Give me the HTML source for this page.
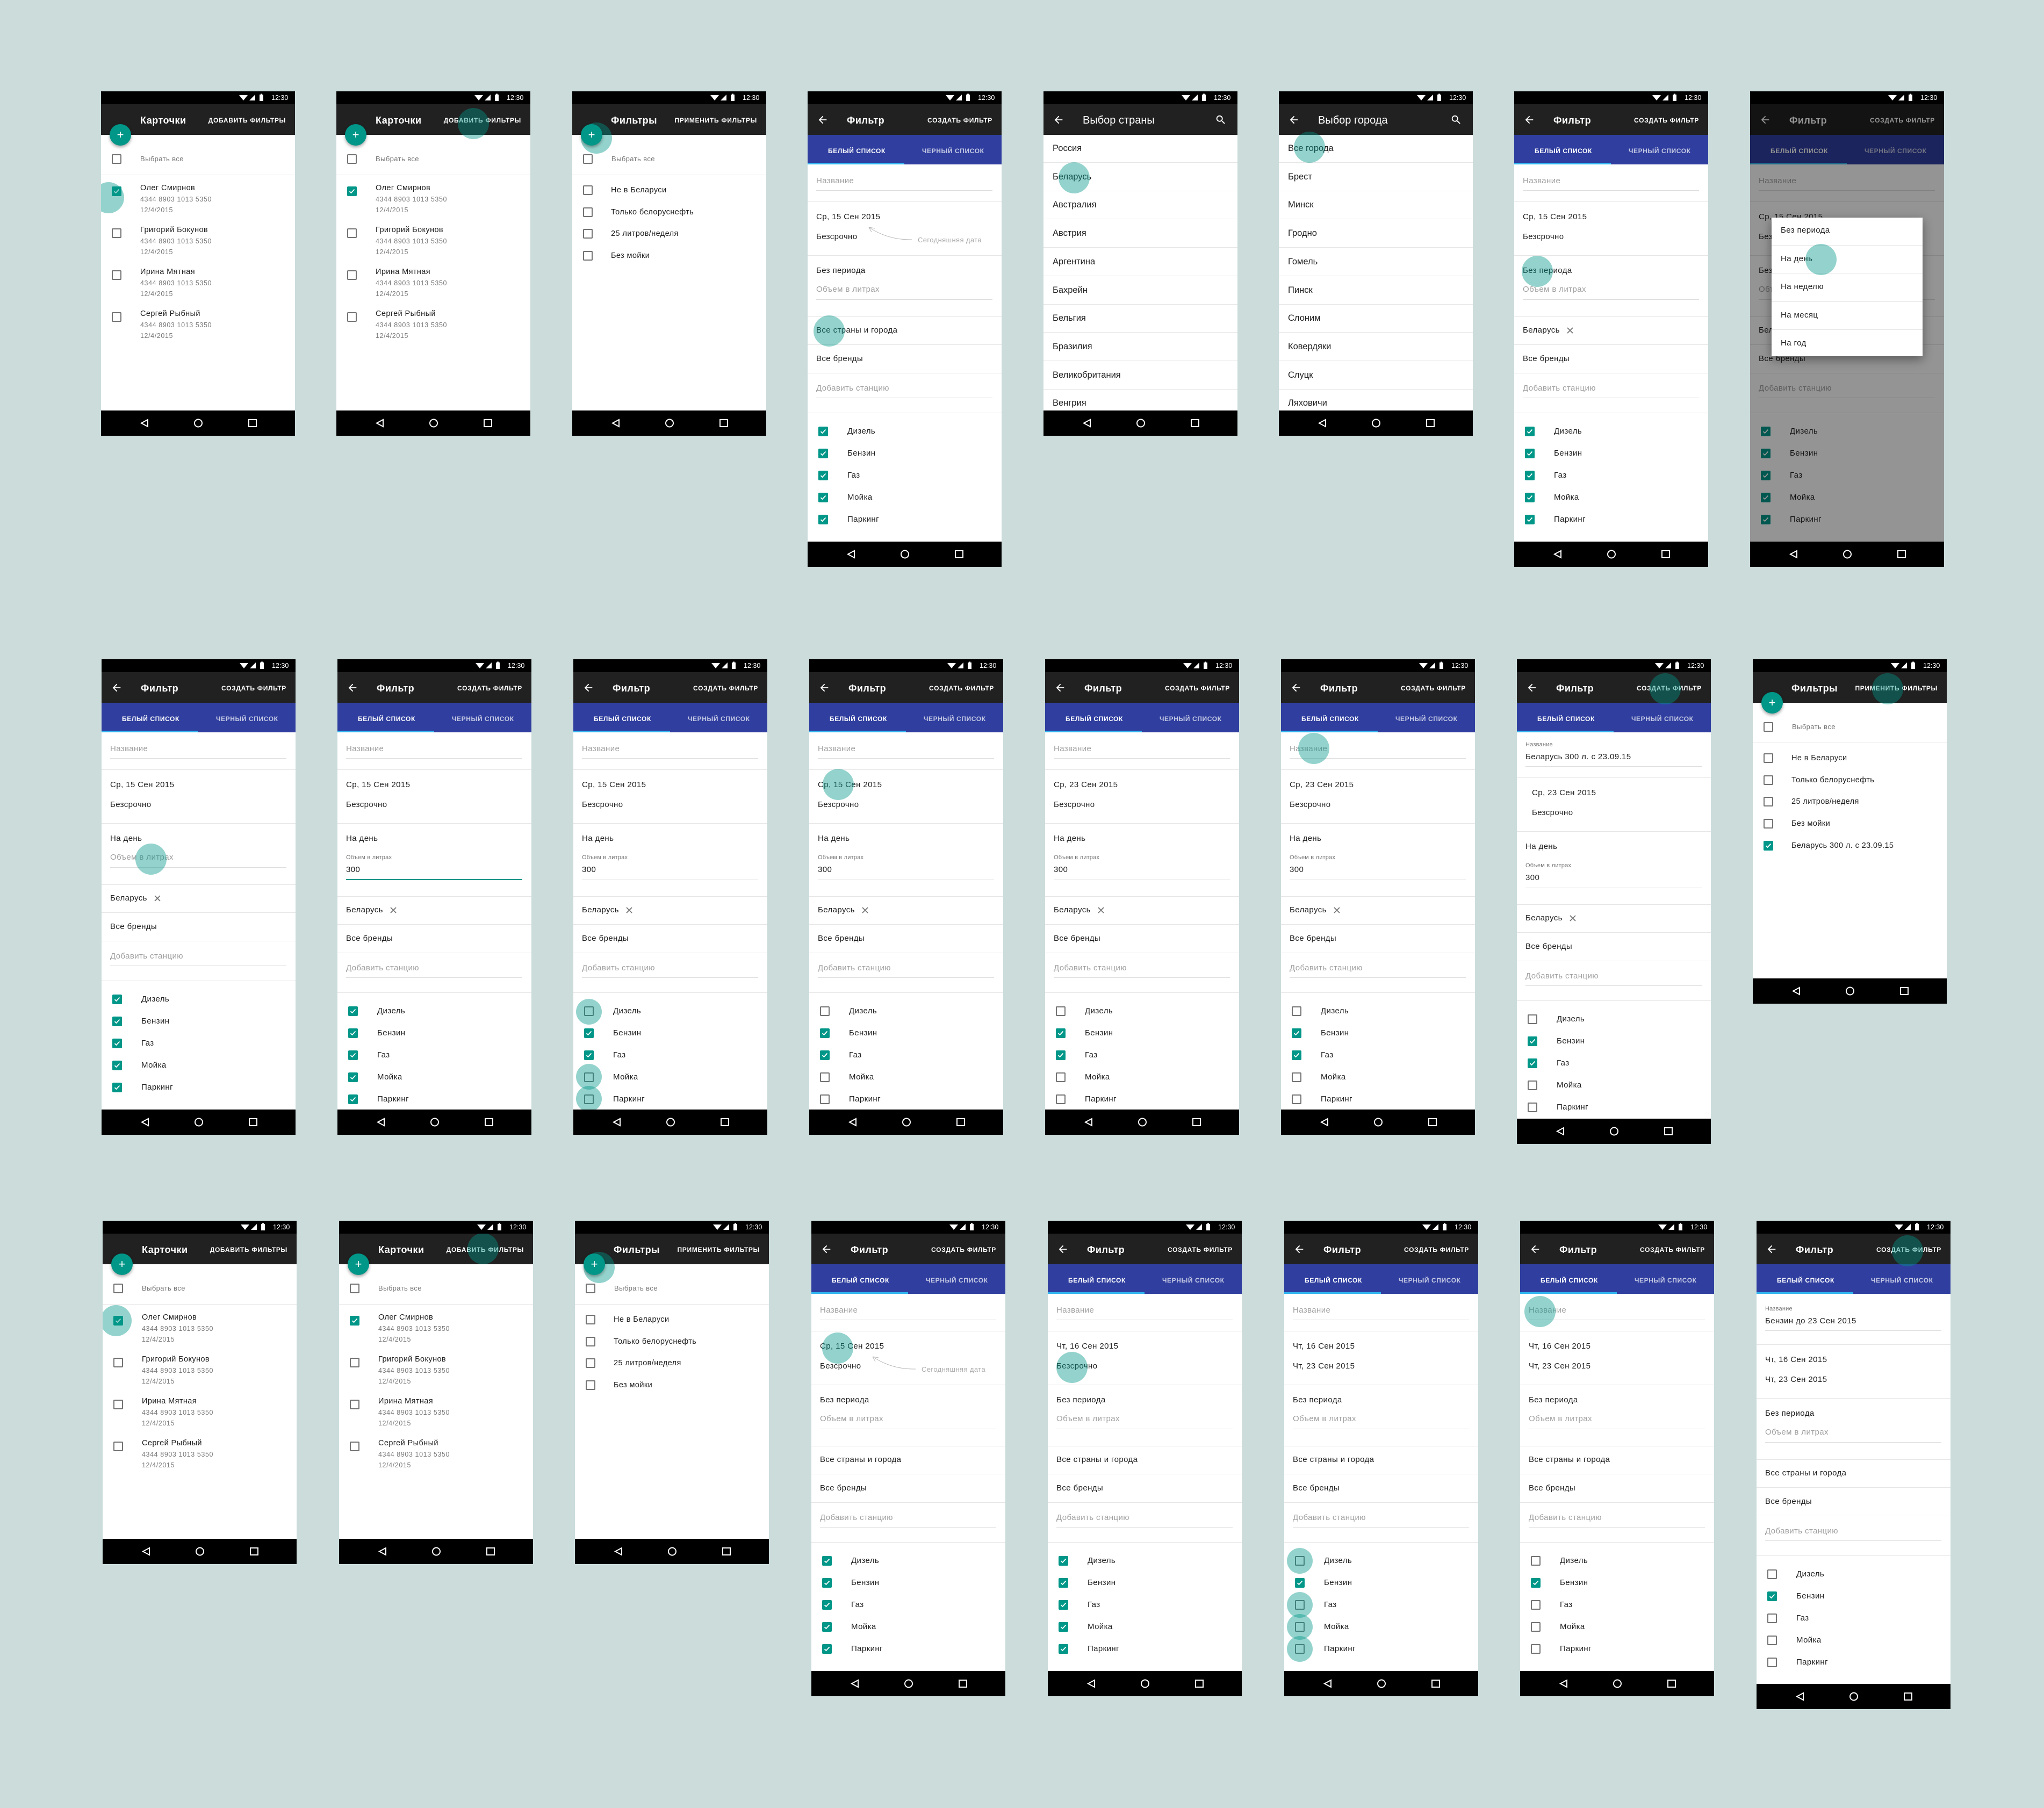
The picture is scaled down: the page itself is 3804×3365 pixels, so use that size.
<!DOCTYPE html>
<html><head><meta charset="utf-8">
<style>
body{margin:0;width:3804px;height:3365px;background:#cbdcdb;position:relative;overflow:hidden;font-family:"Liberation Sans",sans-serif}
.ph{position:absolute;width:361px;background:#fff;overflow:hidden}
.a{position:absolute;white-space:nowrap;line-height:20px;height:20px}
.sb{position:absolute;left:0;top:0;width:361px;height:24px;background:#000}
.ab{position:absolute;left:0;top:24px;width:361px;height:57px;background:#212121}
.tabs{position:absolute;left:0;top:81px;width:361px;height:55px;background:#303f9f}
.ind{position:absolute;left:0;top:133px;width:180px;height:3px;background:#2fb5f0}
.nav{position:absolute;left:0;bottom:0;width:361px;height:47px;background:#000}
.b{font-size:15px;color:#212121;letter-spacing:.4px}
.p{font-size:15px;color:#a0a0a0;letter-spacing:.4px}
.s{font-size:11px;color:#757575;letter-spacing:.2px}
.g{font-size:13px;color:#777;letter-spacing:.4px}
.n{font-size:12.5px;color:#7a7a7a;letter-spacing:.6px}
.tt{font-size:18px;font-weight:bold;color:#fff;letter-spacing:.5px}
.ac{font-size:12px;font-weight:bold;color:#fff;letter-spacing:.7px}
.tb{font-size:12px;font-weight:bold;color:#fff;letter-spacing:.6px}
.tb2{font-size:12px;font-weight:bold;color:rgba(255,255,255,.72);letter-spacing:.6px}
.k{font-family:"Liberation Sans Narrow","Liberation Sans",sans-serif;font-size:16.5px;color:#212121}
.kt{font-family:"Liberation Sans Narrow","Liberation Sans",sans-serif;font-size:20px;color:#fff}
.dv{position:absolute;left:0;width:361px;height:1px;background:#e6e6e6}
.ul{position:absolute;left:16px;width:328px;height:1px;background:#dedede}
.cb{position:absolute;width:14px;height:14px;border:2px solid #737373;border-radius:2px}
.cb.on{background:#009688;border-color:#009688}
.rp{position:absolute;border-radius:50%;background:rgba(0,150,136,.42)}
.fab{position:absolute;left:16px;top:61px;width:40px;height:40px;border-radius:50%;background:#009688;box-shadow:0 3px 6px rgba(0,0,0,.35);color:#fff;font-size:22px;line-height:40px;text-align:center}
</style></head><body>
<div id="root"></div>
<script>
var CK='<svg width="14" height="14" viewBox="0 0 14 14" style="position:absolute;left:0;top:0"><path d="M2.5 7.2l3 2.8 6-6.5" stroke="#fff" stroke-width="1.8" fill="none"/></svg>';
var SB='<div class="sb"><svg width="361" height="24" style="position:absolute;left:0;top:0"><path d="M257 7 L273 7 L265 17 Z" fill="#fff"/><path d="M276 17 L287 17 L287 6 Z" fill="#fff"/><rect x="295" y="6" width="7" height="12" fill="#fff"/><rect x="297" y="4.5" width="3" height="2" fill="#fff"/></svg><div class="a" style="left:317px;top:2px;font-size:12.5px;color:#fff">12:30</div></div>';
var NAV='<div class="nav"><svg width="361" height="47" style="position:absolute;left:0;top:0" fill="none" stroke="#fff" stroke-width="2"><path d="M87 17 L75 23.5 L87 30 Z"/><circle cx="181" cy="23.5" r="7"/><rect x="275" y="17" width="14" height="13"/></svg></div>';
var BACK='<svg width="22" height="22" viewBox="0 0 24 24" style="position:absolute;left:17px;top:42px"><path d="M20 11H7.83l5.59-5.59L12 4l-8 8 8 8 1.41-1.41L7.83 13H20v-2z" fill="#fff"/></svg>';
var SEARCH='<svg width="22" height="22" viewBox="0 0 24 24" style="position:absolute;left:319px;top:42px"><path d="M15.5 14h-.79l-.28-.27A6.47 6.47 0 0 0 16 9.5 6.5 6.5 0 1 0 9.5 16c1.61 0 3.09-.59 4.23-1.57l.27.28v.79l5 4.99L20.49 19l-4.99-5zm-6 0C7.01 14 5 11.99 5 9.5S7.01 5 9.5 5 14 7.01 14 9.5 11.99 14 9.5 14z" fill="#fff"/></svg>';
var XI='<svg width="14" height="14" style="position:absolute" viewBox="0 0 14 14"><path d="M2 2L12 12M12 2L2 12" stroke="#757575" stroke-width="1.8"/></svg>';
function T(x,y,t,c,e){return '<div class="a '+c+'" style="left:'+x+'px;top:'+(y-10)+'px;'+(e||'')+'">'+t+'</div>';}
function TR(y,t,c){return '<div class="a '+c+'" style="right:17px;top:'+(y-10)+'px">'+t+'</div>';}
function R(x,y,r){r=r||29;return '<div class="rp" style="left:'+(x-r)+'px;top:'+(y-r)+'px;width:'+(2*r)+'px;height:'+(2*r)+'px"></div>';}
function CB(x,cy,on){return '<div class="cb'+(on?' on':'')+'" style="left:'+x+'px;top:'+(cy-9)+'px">'+(on?CK:'')+'</div>';}
function DV(y){return '<div class="dv" style="top:'+y+'px"></div>';}
function UL(y,c){return '<div class="ul" style="top:'+y+'px;'+(c||'')+'"></div>';}
function RP(l){var s='';(l||[]).forEach(function(r){s+=R(r[0],r[1],r[2]);});return s;}
var out='';
function phone(x,y,h,inner){out+='<div class="ph" style="left:'+x+'px;top:'+y+'px;height:'+h+'px">'+inner+SB+NAV+'</div>';}

function F(o){
 var h='<div class="ab"></div>'+BACK+T(73,54,'Фильтр','tt')+TR(54,'СОЗДАТЬ ФИЛЬТР','ac');
 h+='<div class="tabs"></div><div class="ind"></div>'+T(38,111,'БЕЛЫЙ СПИСОК','tb')+T(213,111,'ЧЕРНЫЙ СПИСОК','tb2');
 var y=136;
 if(o.name){var k=o.k||0;h+=T(16,y+23+k,'Название','s')+T(16,y+46+k,o.name,'b')+UL(y+63+k);y+=84+2*k;}
 else{h+=T(16,y+31,'Название','p')+UL(y+48);y+=69;}
 h+=DV(y);
 var dx=o.dx||16;
 h+=T(dx,y+29,o.d1,'b')+T(dx,y+66,o.d2,'b');
 if(o.note){h+=T(205,y+72,'Сегодняшняя дата','g','color:#aaa');
  h+='<svg width="361" height="100" style="position:absolute;left:0;top:'+y+'px" fill="none" stroke="#b5b5b5" stroke-width="1"><path d="M194 71 Q150 72 114 48"/><path d="M114 48 L125 50 M114 48 L119 57"/></svg>';}
 y+=100;h+=DV(y);
 h+=T(16,y+29,o.per,'b');
 if(o.vol=='ph'){h+=T(16,y+64,'Объем в литрах','p')+UL(y+82);y+=114;}
 else{h+=T(16,y+64,'Объем в литрах','s')+T(16,y+87,'300','b')+(o.vol=='focus'?UL(y+104,'height:2px;background:#009688'):UL(y+105));y+=136;}
 h+=DV(y);
 if(o.bel){h+=T(16,y+26,'Беларусь','b')+'<div style="position:absolute;left:97px;top:'+(y+19)+'px">'+XI+'</div>';}
 else h+=T(16,y+26,'Все страны и города','b');
 y+=52;h+=DV(y);
 h+=T(16,y+27,'Все бренды','b');y+=53;h+=DV(y);
 h+=T(16,y+29,'Добавить станцию','p')+UL(y+46);y+=74;h+=DV(y);
 var lab=['Дизель','Бензин','Газ','Мойка','Паркинг'];
 for(var i=0;i<5;i++){var cy=y+35+41*i;h+=CB(20,cy,o.ch[i])+T(74,cy,lab[i],'b');}
 h+=RP(o.rp);
 if(o.pop){h+='<div style="position:absolute;left:0;top:0;width:361px;height:100%;background:rgba(0,0,0,.42)"></div>';
  h+='<div style="position:absolute;left:40px;top:235px;width:281px;height:258px;background:#fff;box-shadow:0 6px 18px rgba(0,0,0,.4);overflow:hidden">';
  var it=['Без периода','На день','На неделю','На месяц','На год'];
  for(var j=0;j<5;j++){h+=T(17,24+52.5*j,it[j],'b');if(j)h+=DV(52.5*j-2);}
  h+=R(92,78,29)+'</div>';}
 return h;
}
function C(o){
 var h='<div class="ab"></div>'+T(73,54,'Карточки','tt')+TR(54,'ДОБАВИТЬ ФИЛЬТРЫ','ac');
 h+=CB(20,126,0)+T(73,126,'Выбрать все','g')+DV(155);
 var nm=['Олег Смирнов','Григорий Бокунов','Ирина Мятная','Сергей Рыбный'];
 for(var i=0;i<4;i++){var y=180+78*i;h+=CB(20,y+6,i==0)+T(73,y,nm[i],'b','font-size:14.5px')+T(73,y+21,'4344 8903 1013 5350','n')+T(73,y+41,'12/4/2015','n');}
 h+=RP(o.rp)+'<div class="fab">+</div>';
 return h;
}
function L(o){
 var h='<div class="ab"></div>'+T(72,54,'Фильтры','tt')+TR(54,'ПРИМЕНИТЬ ФИЛЬТРЫ','ac');
 h+=CB(20,126,0)+T(73,126,'Выбрать все','g')+DV(155);
 for(var i=0;i<o.it.length;i++){var y=184+40.7*i;h+=CB(20,y,o.on==i)+T(72,y,o.it[i],'b','font-size:14.5px');}
 h+=RP(o.rp)+'<div class="fab">+</div>';
 return h;
}
function K(o){
 var h='<div class="ab"></div>'+BACK+T(73,54,o.t,'kt')+SEARCH;
 for(var i=0;i<o.it.length;i++){h+=T(17,106+52.7*i,o.it[i],'k');h+=DV(132+52.7*i);}
 h+=RP(o.rp);return h;
}
var A=[1,1,1,1,1],B=[0,1,1,0,0],D=[0,1,0,0,0];
var its4=['Не в Беларуси','Только белоруснефть','25 литров/неделя','Без мойки'];
var r1=function(i){return Math.round(188+438.4*i);};
phone(r1(0),170,641,C({rp:[[14,198]]}));
phone(r1(1),170,641,C({rp:[[255,60]]}));
phone(r1(2),170,641,L({it:its4,on:-1,rp:[[45,87]]}));
phone(r1(3),170,885,F({d1:'Ср, 15 Сен 2015',d2:'Безсрочно',note:1,per:'Без периода',vol:'ph',ch:A,rp:[[40,446]]}));
phone(r1(4),170,641,K({t:'Выбор страны',it:['Россия','Беларусь','Австралия','Австрия','Аргентина','Бахрейн','Бельгия','Бразилия','Великобритания','Венгрия'],rp:[[57,161]]}));
phone(r1(5),170,641,K({t:'Выбор города',it:['Все города','Брест','Минск','Гродно','Гомель','Пинск','Слоним','Ковердяки','Слуцк','Ляховичи'],rp:[[57,104]]}));
phone(r1(6),170,885,F({d1:'Ср, 15 Сен 2015',d2:'Безсрочно',per:'Без периода',vol:'ph',bel:1,ch:A,rp:[[43,335]]}));
phone(r1(7),170,885,F({d1:'Ср, 15 Сен 2015',d2:'Безсрочно',per:'Без периода',vol:'ph',bel:1,ch:A,pop:1}));
var r2=function(i){return Math.round(189+439*i);};
phone(r2(0),1227,885,F({d1:'Ср, 15 Сен 2015',d2:'Безсрочно',per:'На день',vol:'ph',bel:1,ch:A,rp:[[92,372]]}));
phone(r2(1),1227,885,F({d1:'Ср, 15 Сен 2015',d2:'Безсрочно',per:'На день',vol:'focus',bel:1,ch:A}));
phone(r2(2),1227,885,F({d1:'Ср, 15 Сен 2015',d2:'Безсрочно',per:'На день',vol:'300',bel:1,ch:B,rp:[[29,656,24],[29,777,24],[29,818,24]]}));
phone(r2(3),1227,885,F({d1:'Ср, 15 Сен 2015',d2:'Безсрочно',per:'На день',vol:'300',bel:1,ch:B,rp:[[54,233]]}));
phone(r2(4),1227,885,F({d1:'Ср, 23 Сен 2015',d2:'Безсрочно',per:'На день',vol:'300',bel:1,ch:B}));
phone(r2(5),1227,885,F({d1:'Ср, 23 Сен 2015',d2:'Безсрочно',per:'На день',vol:'300',bel:1,ch:B,rp:[[61,166]]}));
phone(r2(6),1227,902,F({name:'Беларусь 300 л. с 23.09.15',dx:28,d1:'Ср, 23 Сен 2015',d2:'Безсрочно',per:'На день',vol:'300',bel:1,ch:B,rp:[[276,55]]}));
phone(r2(7),1227,641,L({it:['Не в Беларуси','Только белоруснефть','25 литров/неделя','Без мойки','Беларусь 300 л. с 23.09.15'],on:4,rp:[[251,55]]}));
var r3=function(i){return Math.round(191+439.7*i);};
phone(r3(0),2272,639,C({rp:[[25,186]]}));
phone(r3(1),2272,639,C({rp:[[268,52]]}));
phone(r3(2),2272,639,L({it:its4,on:-1,rp:[[45,87]]}));
phone(r3(3),2272,885,F({d1:'Ср, 15 Сен 2015',d2:'Безсрочно',note:1,per:'Без периода',vol:'ph',ch:A,rp:[[49,237]]}));
phone(r3(4),2272,885,F({d1:'Чт, 16 Сен 2015',d2:'Безсрочно',per:'Без периода',vol:'ph',ch:A,rp:[[45,273]]}));
phone(r3(5),2272,885,F({d1:'Чт, 16 Сен 2015',d2:'Чт, 23 Сен 2015',per:'Без периода',vol:'ph',ch:D,rp:[[29,633,24],[29,715,24],[29,756,24],[29,797,24]]}));
phone(r3(6),2272,885,F({d1:'Чт, 16 Сен 2015',d2:'Чт, 23 Сен 2015',per:'Без периода',vol:'ph',ch:D,rp:[[37,169]]}));
phone(r3(7),2272,909,F({name:'Бензин до 23 Сен 2015',k:5,d1:'Чт, 16 Сен 2015',d2:'Чт, 23 Сен 2015',per:'Без периода',vol:'ph',ch:D,rp:[[281,56]]}));
document.getElementById('root').innerHTML=out;
</script>
</body></html>
